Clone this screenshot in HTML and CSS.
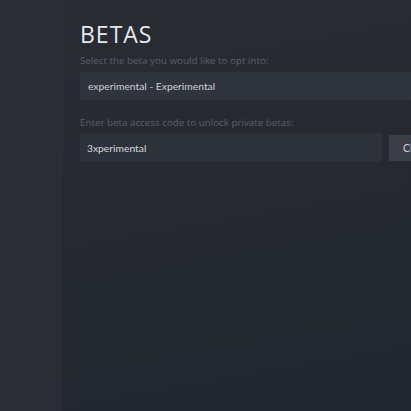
FILE: index.html
```html
<!DOCTYPE html>
<html lang="en">
<head>
    <meta charset="UTF-8">
    <meta name="viewport" content="width=device-width, initial-scale=1.0">
    <title>Betas</title>
    <link rel="stylesheet" href="styles.css">
</head>
<body>
    <div class="janela">
        <div class="lateral"></div>
        <div class="conteudo">
            <h1>BETAS</h1>
            <label class="rotulo">Select the beta you would like to opt into:</label>
            <div class="seletor">experimental - Experimental</div>
            <label class="rotulo rotulo2">Enter beta access code to unlock private betas:</label>
            <div class="linha-codigo">
                <input class="codigo" type="text" value="3xperimental">
                <button class="botao">Check Code</button>
            </div>
        </div>
    </div>
</body>
</html>
```

FILE: styles.css
```css
body {
    margin: 0;
    background: #24272e;
    font-family: "Open Sans", "Noto Sans", sans-serif;
    overflow: hidden;
}

.janela {
    display: flex;
    width: 411px;
    height: 411px;
}

.lateral {
    width: 63px;
    flex-shrink: 0;
    background: #2a2d32;
}

.conteudo {
    flex: 1;
    display: flex;
    flex-direction: column;
    padding: 18px 0 0 17px;
    background: linear-gradient(170deg, #292c33 0%, #262a30 40%, #22262f 100%);
    min-width: 0;
}

h1 {
    margin: 0;
    font-size: 23px;
    font-weight: 400;
    letter-spacing: 1px;
    color: #e6e8eb;
    line-height: 32px;
}

.rotulo {
    font-size: 9.8px;
    color: #595f6b;
    line-height: 14px;
    margin-top: 4px;
    white-space: nowrap;
}

.rotulo2 {
    margin-top: 16px;
}

.seletor {
    margin-top: 4px;
    height: 28px;
    width: 360px;
    background: #30343c;
    color: #cdd0d5;
    font-family: "Lato", sans-serif;
    font-size: 10.3px;
    line-height: 28px;
    padding-left: 8px;
    box-sizing: border-box;
}

.linha-codigo {
    display: flex;
    gap: 7px;
    margin-top: 3px;
    align-items: center;
}

.codigo {
    width: 302px;
    height: 29px;
    flex-shrink: 0;
    box-sizing: border-box;
    border: none;
    outline: none;
    background: #2d3139;
    color: #d6d9dd;
    font-family: "Lato", sans-serif;
    font-size: 10.3px;
    padding: 0 7px;
}

.botao {
    flex-shrink: 0;
    height: 26px;
    border: none;
    background: #3b3f48;
    color: #c9ccd1;
    font-family: "Lato", sans-serif;
    font-size: 10.5px;
    padding: 0 14px;
    white-space: nowrap;
}
```
